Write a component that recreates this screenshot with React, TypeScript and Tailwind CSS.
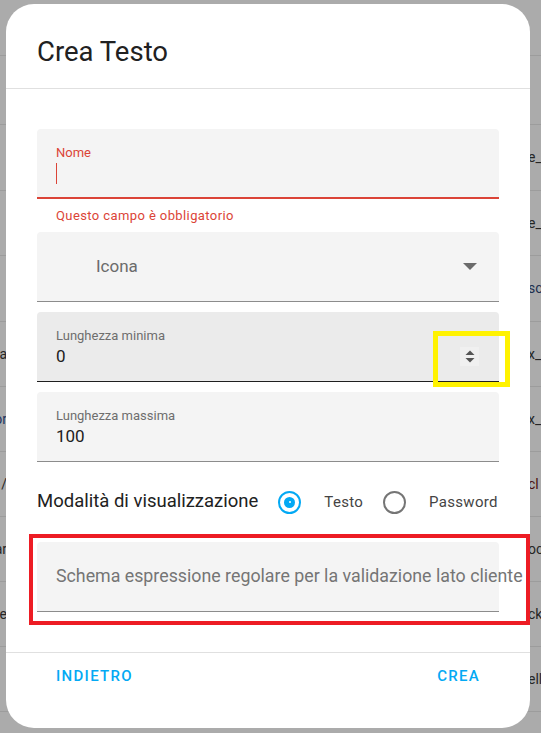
import React from 'react';

const bgRows = [
  { h: 'h-[56px]', left: '', leftColor: '', right: '', rightColor: '' },
  { h: 'h-[69px]', left: '', leftColor: '', right: '', rightColor: '' },
  { h: 'h-[66px]', left: '', leftColor: '', right: 'e_', rightColor: 'text-[#262626]' },
  { h: 'h-[65px]', left: '', leftColor: '', right: 'e_', rightColor: 'text-[#262626]' },
  { h: 'h-[66px]', left: '', leftColor: '', right: 'sc', rightColor: 'text-[#1d2f4f]' },
  { h: 'h-[65px]', left: 'a', leftColor: 'text-[#262626]', right: 'x_', rightColor: 'text-[#262626]' },
  { h: 'h-[65px]', left: 'or', leftColor: 'text-[#1d3561]', right: 'x_', rightColor: 'text-[#262626]' },
  { h: 'h-[65px]', left: '/', leftColor: 'text-[#262626]', right: 'cl', rightColor: 'text-[#4a1010]' },
  { h: 'h-[65px]', left: 'ar', leftColor: 'text-[#262626]', right: 'oc', rightColor: 'text-[#262626]' },
  { h: 'h-[65px]', left: 'e', leftColor: 'text-[#262626]', right: 'ck', rightColor: 'text-[#262626]' },
  { h: 'h-[65px]', left: '', leftColor: '', right: 'ell', rightColor: 'text-[#262626]' },
];

function FieldLabel({ children, error }: { children: React.ReactNode; error?: boolean }) {
  return (
    <div className={`text-[13px] leading-[16px] ${error ? 'text-[#db4437]' : 'text-[#6e6e6e]'}`}>
      {children}
    </div>
  );
}

export default function App() {
  return (
    <div className="relative w-[541px] h-[733px] overflow-hidden bg-[#ababab] font-['Roboto',sans-serif]">

      {/* table behind the overlay */}
      <div className="flex flex-col w-full">
        {bgRows.map((row, i) => (
          <div key={i} className={`${row.h} flex items-center border-b border-[#9c9c9c] text-[14px]`}>
            <div className="w-[7px] overflow-hidden flex justify-end whitespace-nowrap">
              <span className={row.leftColor}>{row.left}</span>
            </div>
            <div className="flex-1" />
            <div className="w-[13px] overflow-hidden whitespace-nowrap">
              <span className={row.rightColor}>{row.right}</span>
            </div>
          </div>
        ))}
      </div>

      {/* dialog */}
      <div className="absolute left-[6px] top-[4px] w-[524px] h-[724px] rounded-[28px] bg-white flex flex-col">

        <div className="h-[85px] pt-[30px] pl-[31px] border-b border-[#e0e0e0]">
          <h2 className="text-[27.5px] leading-[36px] text-[#212121]">Crea Testo</h2>
        </div>

        <div className="px-[31px] pt-[40px] flex flex-col">

          {/* Nome */}
          <div className="h-[70px] bg-[#f4f4f4] rounded-t-[4px] border-b-2 border-[#db4437] pl-[19px] pt-[16px]">
            <FieldLabel error>Nome</FieldLabel>
            <div className="mt-[2px] w-px h-[21px] bg-[#db4437]" />
          </div>
          <div className="h-[33px] flex items-center pl-[19px] text-[13px] tracking-[0.4px] text-[#db4437]">
            Questo campo è obbligatorio
          </div>

          {/* Icona */}
          <div className="h-[70px] bg-[#f4f4f4] rounded-t-[4px] border-b border-[#8c8c8c] flex items-center pl-[59px] pr-[22px]">
            <span className="flex-1 text-[17px] text-[#6b6b6b]">Icona</span>
            <svg width="14" height="7" viewBox="0 0 14 7">
              <path d="M0 0 L14 0 L7 7 Z" fill="#6b6b6b" />
            </svg>
          </div>

          {/* Lunghezza minima */}
          <div className="mt-[10px] h-[70px] bg-[#ebebeb] rounded-t-[4px] border-b border-[#1f1f1f] pl-[19px] pr-[20px] pt-[16px]">
            <FieldLabel>Lunghezza minima</FieldLabel>
            <div className="mt-[1px] flex items-center justify-between">
              <span className="text-[17px] leading-[22px] text-[#212121]">0</span>
              <div className="w-[19px] h-[19px] bg-[#f0f0f0] flex items-center justify-center">
                <svg width="10" height="13" viewBox="0 0 10 13">
                  <path d="M5 0.5 L9.5 5 L0.5 5 Z" fill="#555555" />
                  <path d="M0.5 8 L9.5 8 L5 12.5 Z" fill="#555555" />
                </svg>
              </div>
            </div>
          </div>

          {/* Lunghezza massima */}
          <div className="mt-[10px] h-[70px] bg-[#f4f4f4] rounded-t-[4px] border-b border-[#8c8c8c] pl-[19px] pt-[16px]">
            <FieldLabel>Lunghezza massima</FieldLabel>
            <div className="mt-[1px] text-[17px] leading-[22px] text-[#212121]">100</div>
          </div>

          {/* Modalità */}
          <div className="h-[80px] flex items-center whitespace-nowrap">
            <span className="shrink-0 text-[18.5px] text-[#212121]">Modalità di visualizzazione</span>
            <div className="shrink-0 ml-[20px] w-[23px] h-[23px] rounded-full border-2 border-[#03a9f4] flex items-center justify-center">
              <div className="w-[11px] h-[11px] rounded-full bg-[#03a9f4] flex items-center justify-center">
                <div className="w-[2px] h-[2px] rounded-full bg-white" />
              </div>
            </div>
            <span className="shrink-0 ml-[23px] text-[15px] tracking-[0.3px] text-[#444444]">Testo</span>
            <div className="shrink-0 ml-[20px] w-[23px] h-[23px] rounded-full border-2 border-[#757575]" />
            <span className="shrink-0 ml-[23px] text-[15px] tracking-[0.3px] text-[#444444]">Password</span>
          </div>

          {/* Regex */}
          <div className="h-[70px] bg-[#f4f4f4] rounded-t-[4px] border-b border-[#8c8c8c] flex items-center pl-[19px]">
            <span className="whitespace-nowrap text-[17.8px] text-[#757575]">
              Schema espressione regolare per la validazione lato cliente
            </span>
          </div>
        </div>

        <div className="mt-[40px] border-t border-[#e0e0e0] h-[76px] pt-[5px] px-[50px] flex items-start justify-between">
          <button className="h-[36px] text-[15px] font-medium tracking-[1.3px] text-[#03a9f4]">INDIETRO</button>
          <button className="h-[36px] text-[15px] font-medium tracking-[1.3px] text-[#03a9f4]">CREA</button>
        </div>
      </div>

      {/* annotation boxes */}
      <div className="absolute left-[433px] top-[331px] w-[77px] h-[56px] border-[5px] border-[#fff200]" />
      <div className="absolute left-[29px] top-[534px] w-[501px] h-[91px] border-[4px] border-[#ed1c24]" />
    </div>
  );
}
